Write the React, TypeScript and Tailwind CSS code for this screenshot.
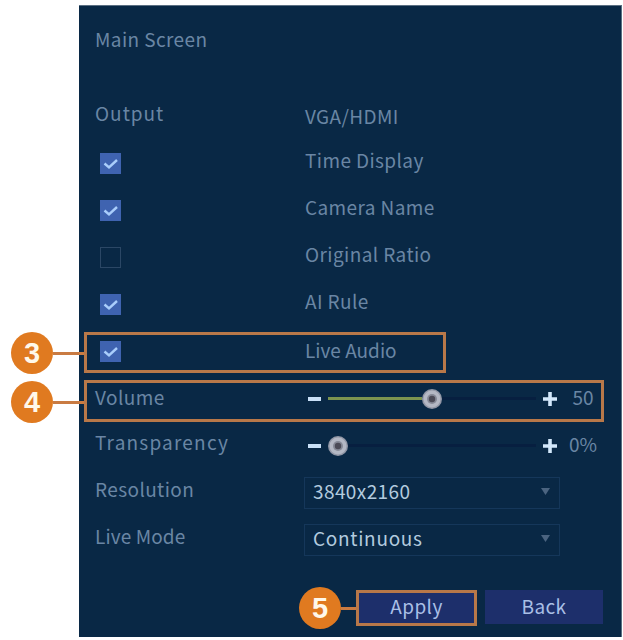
import React from 'react';

interface RowProps {
  label?: string;
  labelClass?: string;
  control?: React.ReactNode;
  children: React.ReactNode;
}

const Row: React.FC<RowProps> = ({ label, labelClass = '-top-[5px]', control, children }) => (
  <div className="relative flex h-[47px] items-center">
    <div className="w-[210px] shrink-0">
      {label ? <span className={`relative ${labelClass}`}>{label}</span> : control}
    </div>
    {children}
  </div>
);

const Checkbox: React.FC<{ checked: boolean }> = ({ checked }) => (
  <div
    className={`relative -top-px ml-[5px] h-[21px] w-[21px] ${checked ? 'bg-[#3f63b0]' : 'border border-[#2b4765]'}`}
  >
    {checked && (
      <svg viewBox="0 0 21 21" className="h-full w-full" fill="none">
        <path d="M4.5 10.5 L9 14.5 L17 7" stroke="#a9cdfb" strokeWidth="2.4" />
      </svg>
    )}
  </div>
);

const Knob: React.FC = () => (
  <svg viewBox="0 0 20 20" className="h-5 w-5 shrink-0">
    <circle cx="10" cy="10" r="10" fill="#9297a6" />
    <circle cx="10" cy="10" r="8.5" fill="#b4b8c4" />
    <circle cx="10" cy="10" r="5" fill="#868996" />
    <circle cx="10" cy="10" r="3.2" fill="#4c4b57" />
  </svg>
);

interface SliderProps {
  percent: number;
  value: string;
}

const Slider: React.FC<SliderProps> = ({ percent, value }) => (
  <div className="relative -top-px flex flex-1 items-center pl-[3px]">
    <div className="h-1 w-[13px] bg-[#c9e0f7]" />
    <div className="ml-[7px] flex w-[208px] items-center">
      <div className="h-[3px] bg-[#7c9450]" style={{ width: `${percent}%` }} />
      <Knob />
      <div className="h-[3px] flex-1 bg-[#071f40]" />
    </div>
    <svg viewBox="0 0 14 14" className="ml-[7px] h-3.5 w-3.5">
      <path d="M0 7 H14 M7 0 V14" stroke="#d3e8fb" strokeWidth="3.6" />
    </svg>
    <span className="relative -top-[2px] w-[52px] text-center tracking-normal">{value}</span>
  </div>
);

const Select: React.FC<{ value: string; textClass?: string }> = ({ value, textClass = '' }) => (
  <div className="relative -top-px -ml-px flex h-8 w-[256px] items-center justify-between border border-[#15375a] pr-[9px] pl-2 text-[#b3cbdf]">
    <span className={`relative -top-[2px] ${textClass}`}>{value}</span>
    <svg viewBox="0 0 9 7" className="relative -top-px h-[7px] w-[9px]">
      <path d="M0 0 H9 L4.5 7 Z" fill="#4b6480" />
    </svg>
  </div>
);

const Callout: React.FC<{ number: number; line: string }> = ({ number, line }) => (
  <div className="flex items-center">
    <div className="flex h-[42px] w-[42px] items-center justify-center rounded-full bg-[#e07a20] font-['Liberation_Sans'] text-[29px] font-bold tracking-normal text-[#fff8ea]">
      {number}
    </div>
    <div className={`h-[3px] bg-[#c97b42] ${line}`} />
  </div>
);

const App: React.FC = () => {
  const options = [
    { name: 'Time Display', checked: true },
    { name: 'Camera Name', checked: true },
    { name: 'Original Ratio', checked: false },
    { name: 'AI Rule', checked: true },
  ];

  return (
    <div className="h-[640px] w-[623px] bg-white pt-[5px] pl-[79px] font-['Noto_Sans_CJK_SC','Noto_Sans',sans-serif] text-[19px] leading-6 tracking-[0.4px] whitespace-nowrap text-[#6a86a4]">
      <div className="h-[632px] w-[543px] border-t border-r border-t-[#5b6f82] border-r-[#5b6f82] bg-[#092845] pl-4">
        <div className="h-[88px] pt-[21px]">Main Screen</div>

        <Row label="Output" labelClass="-top-[5px] tracking-[1px]">
          <span className="relative -top-[2px]">VGA/HDMI</span>
        </Row>
        {options.map((option) => (
          <Row key={option.name} control={<Checkbox checked={option.checked} />}>
            <span className="relative -top-[5px]">{option.name}</span>
          </Row>
        ))}

        {/* Live audio */}
        <Row control={<Checkbox checked />}>
          <span className="relative -top-[3px] tracking-normal">Live Audio</span>
          <div className="absolute top-[3px] -left-[11px] h-[41px] w-[362px] border-[3px] border-[#b87849]" />
          <div className="absolute top-[3px] -left-[84px]">
            <Callout number={3} line="w-[31px]" />
          </div>
        </Row>

        {/* Sliders */}
        <Row label="Volume" labelClass="-top-[3px]">
          <Slider percent={45} value="50" />
          <div className="absolute top-[4px] -left-[11px] h-[42px] w-[520px] border-[3px] border-[#b87849]" />
          <div className="absolute top-[5px] -left-[84px]">
            <Callout number={4} line="w-[31px]" />
          </div>
        </Row>
        <Row label="Transparency" labelClass="-top-[5px] tracking-[1.2px]">
          <Slider percent={0} value="0%" />
        </Row>

        <Row label="Resolution">
          <Select value="3840x2160" />
        </Row>
        <Row label="Live Mode" labelClass="-top-[5px] tracking-[0.1px]">
          <Select value="Continuous" textClass="tracking-[0.7px]" />
        </Row>

        {/* Footer buttons */}
        <div className="mt-[23px] flex items-center justify-end gap-2 pr-[18px]">
          <Callout number={5} line="-mr-2 w-[15px]" />
          <button className="flex h-9 w-[121px] items-center justify-center border-[3px] border-[#b87849] bg-[#1d2f6b] text-[#a9bfe6]">
            <span className="relative -top-[2px]">Apply</span>
          </button>
          <button className="relative -top-px flex h-[34px] w-[118px] items-center justify-center bg-[#1d2f6b] text-[#a9bfe6]">
            <span className="relative -top-px">Back</span>
          </button>
        </div>
      </div>
    </div>
  );
};

export default App;
